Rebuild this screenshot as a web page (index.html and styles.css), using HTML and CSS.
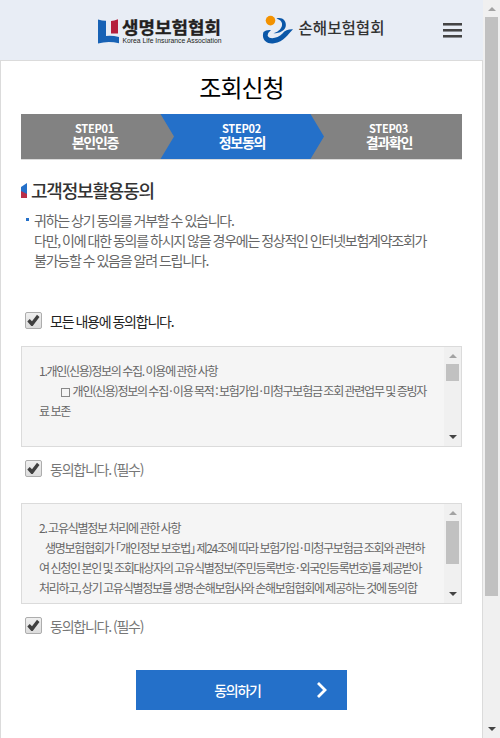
FILE: index.html
```
<!DOCTYPE html>
<html lang="ko">
<head>
    <meta charset="UTF-8">
    <meta name="viewport" content="width=device-width, initial-scale=1.0">
    <title>조회신청</title>
    <link rel="stylesheet" href="styles.css">
</head>
<body>
    <div class="page">
        <!-- 상단 로고 -->
        <header class="header">
            <svg class="logo-life" width="126" height="32" viewBox="0 0 126 32">
                <path d="M1 4.500Q6 6 9 5.800V21Q15 20.300 22 22V28.200Q11 25.500 1 28.500z" fill="#1762b5"/>
                <path d="M14 6Q17 6 21 4.200V18.500H14z" fill="#b51f3c"/>
                <text x="25" y="18.500" class="logo-life-name" textLength="99" lengthAdjust="spacingAndGlyphs">생명보험협회</text>
                <text x="25.500" y="27.500" class="logo-life-en" textLength="99" lengthAdjust="spacingAndGlyphs">Korea Life Insurance Association</text>
            </svg>
            <svg class="logo-general" width="124" height="32" viewBox="0 0 124 32">
                <path d="M1.500 17C-1 25 5 29.500 12 28.300C22 27 26 19 31 14.300Q24 14 20.500 18.500C16 23 8 25 5.800 21Q5 18.500 9 15Q4 14.500 1.500 17z" fill="#0a57a8"/>
                <path d="M14.500 3.500C20 1.800 24.500 5.500 23.800 11C23.200 15.500 18 18.300 11.500 18.300C17 16.500 20.500 13 20 8.500Q19.500 5 14.500 3.500z" fill="#0a57a8"/>
                <circle cx="8.500" cy="5.600" r="4.800" fill="#f39200"/>
                <text x="36.500" y="18.500" class="logo-general-name" textLength="86" lengthAdjust="spacingAndGlyphs">손해보험협회</text>
            </svg>
            <div class="menu"><i></i><i></i><i></i></div>
        </header>

        <main class="content">
            <h1>조회신청</h1>

            <!-- 진행 단계 -->
            <div class="steps">
                <svg class="steps-bg" width="441" height="45" viewBox="0 0 441 45">
                    <path d="M0 0H441V45H0z" fill="#828282"/>
                    <path d="M139.500 0H289.500L303 22.500L289.500 45H139.500L153 22.500z" fill="#2470c9"/>
                </svg>
                <div class="step"><span>STEP01</span><b>본인인증</b></div>
                <div class="step"><span>STEP02</span><b>정보동의</b></div>
                <div class="step"><span>STEP03</span><b>결과확인</b></div>
            </div>

            <h2>
                <svg width="6" height="15" viewBox="0 0 6 15"><path d="M0 4L6 0V15H0z" fill="#2470c9"/><path d="M0 8L6 11V15H0z" fill="#b82e48"/></svg>
                고객정보활용동의
            </h2>
            <p class="notice">귀하는 상기 동의를 거부할 수 있습니다.<br>다만, 이에 대한 동의를 하시지 않을 경우에는 정상적인 인터넷보험계약조회가<br>불가능할 수 있음을 알려 드립니다.</p>

            <div class="agree agree-all">
                <svg class="check" width="18" height="18" viewBox="0 0 18 18"><use href="#checkbox"/></svg>
                모든 내용에 동의합니다.
            </div>

            <div class="terms">
                <div class="terms-text">1.개인(신용)정보의 수집. 이용에 관한 사항
<span class="indent"><i class="square"></i> 개인(신용)정보의 수집<span class="dot">·</span>이용 목적 : 보험가입<span class="dot">·</span>미청구보험금 조회 관련업무 및 증빙자</span>
료 보존

<span class="indent-large">개인식별정보</span></div>
                <div class="scroll">
                    <i class="up"></i>
                    <div class="thumb thumb-short"></div>
                    <i class="down"></i>
                </div>
            </div>
            <div class="agree">
                <svg class="check" width="18" height="18" viewBox="0 0 18 18"><use href="#checkbox"/></svg>
                동의합니다. (필수)
            </div>

            <div class="terms">
                <div class="terms-text">2. 고유식별정보 처리에 관한 사항
<span class="indent-small">생명보험협회가 <span class="bracket">「</span>개인정보 보호법<span class="bracket">」</span> 제24조에 따라 보험가입<span class="dot">·</span>미청구보험금 조회와 관련하</span>
여 신청인 본인 및 조회대상자의 고유식별정보(주민등록번호<span class="dot">·</span>외국인등록번호)를 제공받아
처리하고, 상기 고유식별정보를 생명·손해보험사와 손해보험협회에 제공하는 것에 동의합</div>
                <div class="scroll">
                    <i class="up"></i>
                    <div class="thumb thumb-long"></div>
                    <i class="down"></i>
                </div>
            </div>
            <div class="agree">
                <svg class="check" width="18" height="18" viewBox="0 0 18 18"><use href="#checkbox"/></svg>
                동의합니다. (필수)
            </div>

            <a href="#" class="submit">동의하기
                <svg class="arrow" width="12" height="18" viewBox="0 0 12 18"><path d="M2 2L9 9L2 16" fill="none" stroke="#fff" stroke-width="2.800"/></svg>
            </a>
        </main>
    </div>

    <!-- 페이지 스크롤바 -->
    <div class="scroll page-scroll">
        <i class="up"></i>
        <div class="thumb"></div>
        <i class="down"></i>
    </div>

    <svg class="defs" width="0" height="0">
        <defs>
            <linearGradient id="box" x1="0" y1="0" x2="0" y2="1"><stop offset="0" stop-color="#f0f0f0"/><stop offset="1" stop-color="#dcdcdc"/></linearGradient>
            <symbol id="checkbox" viewBox="0 0 18 18">
                <rect x="1.500" y="0.500" width="16" height="16" rx="1.500" fill="url(#box)" stroke="#adadad"/>
                <path d="M3.300 9.500L5.700 7L8 9.300L13 2.800L15.500 5L8.700 14H7.300z" fill="#404040"/>
            </symbol>
        </defs>
    </svg>
</body>
</html>
```
FILE: styles.css
```
* {
    box-sizing: border-box;
}
body {
    margin: 0;
    display: flex;
    height: 738px;
    overflow: hidden;
    background: #fff;
    color: #666;
    font-family: "Noto Sans CJK KR", sans-serif;
    font-size: 14px;
    letter-spacing: -1.25px;
    word-spacing: -0.5px;
}
.page {
    width: 483px;
}
.header {
    display: flex;
    height: 60px;
    padding: 15px 21px 0 97px;
    background: #e8edf5;
    letter-spacing: 0;
    word-spacing: 0;
}
.logo-general {
    margin-left: 39px;
}
.logo-life-name {
    font-size: 17.5px;
    font-weight: 700;
    fill: #231f20;
    stroke: #231f20;
    stroke-width: 0.3px;
}
.logo-life-en {
    font-family: "Liberation Sans", Arial, sans-serif;
    font-size: 7px;
    fill: #231f20;
}
.logo-general-name {
    font-size: 16px;
    font-weight: 500;
    fill: #333;
}
.menu {
    display: flex;
    flex-direction: column;
    gap: 3px;
    width: 19px;
    margin: 8px 0 0 auto;
}
.menu i {
    height: 2px;
    background: #444;
    box-shadow: 0 1px 0 #8c8f94;
}
.menu i + i {
    margin-top: 1px;
}
.content {
    height: 678px;
    padding: 0 20px;
    border: 1px solid #dbdbdb;
    border-bottom: 0;
}
h1 {
    margin: 0;
    height: 53px;
    line-height: 51px;
    font-size: 24px;
    font-weight: 400;
    letter-spacing: -1px;
    color: #000;
    text-align: center;
}
.steps {
    position: relative;
    display: flex;
    height: 46px;
    border-bottom: 1px solid #dbdbdb;
    color: #fff;
    text-align: center;
}
.steps-bg {
    position: absolute;
    top: 0;
    left: 0;
}
.step {
    position: relative;
    flex: 1;
    padding-top: 6px;
}
.step span,
.step b {
    display: block;
}
.step span {
    height: 15px;
    line-height: 16px;
    font-size: 11px;
    font-weight: 700;
    letter-spacing: -0.25px;
}
.step b {
    height: 14px;
    padding-left: 1px;
    line-height: 14px;
    font-weight: 700;
}
h2 {
    display: flex;
    align-items: center;
    gap: 4px;
    height: 26px;
    margin: 17px 0 0;
    font-size: 18px;
    font-weight: 500;
    letter-spacing: -1.2px;
    color: #333;
}
.notice {
    margin: 7px 0 0;
    padding-left: 13px;
    line-height: 20px;
    white-space: nowrap;
    background: linear-gradient(#2470c9, #2470c9) 5px 8px / 3px 3px no-repeat;
}
.agree {
    display: flex;
    align-items: center;
    gap: 8px;
    height: 20px;
    margin: 12px 0 24px;
    padding-left: 3px;
    color: #777;
}
.agree-all {
    margin: 41px 0 15px;
    color: #222;
}
.terms {
    display: flex;
    height: 101px;
    border: 1px solid #dbdbdb;
    background: #f5f5f5;
}
.terms-text {
    flex: 1;
    min-width: 0;
    padding: 14px 0 0 17px;
    overflow: hidden;
    font-size: 12px;
    line-height: 20px;
    white-space: pre;
}
.indent {
    margin-left: 22px;
}
.indent-small {
    margin-left: 6px;
}
.indent-large {
    display: inline-block;
    margin: 1px 0 0 90px;
}
.square {
    display: inline-block;
    width: 9px;
    height: 9px;
    margin-right: 1px;
    border: 1px solid #888;
    vertical-align: -1px;
}
.dot {
    margin: 0 1.4px;
}
.bracket {
    font-feature-settings: "halt";
}
.scroll {
    display: flex;
    flex-direction: column;
    align-items: center;
    width: 17px;
    padding: 7px 0;
    background: #f0f0f0;
}
.scroll .up,
.scroll .down {
    border: 4px solid transparent;
}
.scroll .up {
    border-top: 0;
    border-bottom-color: #a3a3a3;
}
.scroll .down {
    margin-top: auto;
    border-bottom: 0;
    border-top-color: #444;
}
.thumb {
    width: 13px;
    margin-top: 6px;
    background: #c1c1c1;
}
.thumb-short {
    height: 17px;
}
.thumb-long {
    height: 43px;
}
.page-scroll .thumb {
    height: 579px;
}
.submit {
    position: relative;
    display: block;
    width: 211px;
    height: 40px;
    margin: 34px auto 0;
    padding-right: 8px;
    background: #2470c9;
    color: #fff;
    font-weight: 500;
    line-height: 40px;
    text-align: center;
    text-decoration: none;
}
.arrow {
    position: absolute;
    top: 11px;
    right: 19px;
}
.defs {
    position: absolute;
}
```
